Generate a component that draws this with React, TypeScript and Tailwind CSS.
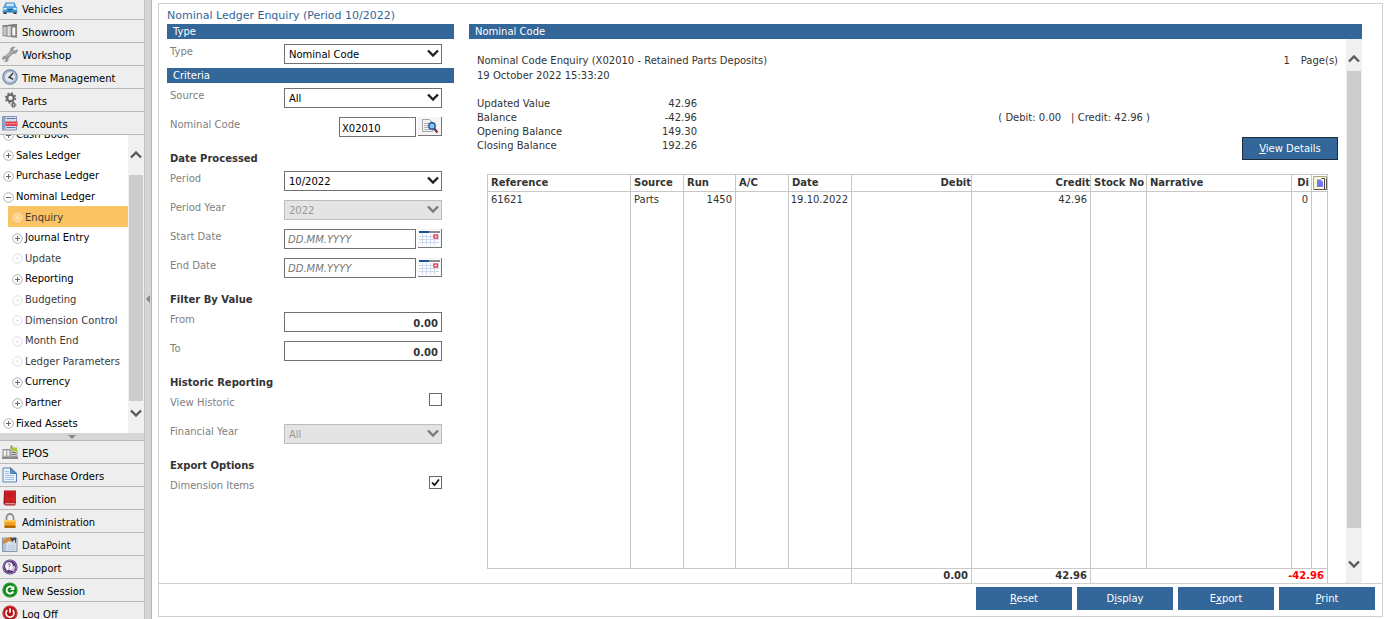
import { ReactNode, useState } from "react";

interface NavEntry {
    name: string;
    icon: ReactNode;
}

interface TreeEntry {
    name: string;
    kind: "plus" | "minus" | "leaf";
    level: number;
    active?: boolean;
}

const Icon = ({ children }: { children: ReactNode }) => (
    <svg viewBox="0 0 16 16" className="w-4 h-4 shrink-0" aria-hidden="true">
        {children}
    </svg>
);

const CarIcon = () => (
    <Icon>
        <path d="M3.5 2.5h9l1.8 4.5H1.7z" fill="#3d8fc9" />
        <path d="M4.6 3.5h6.8l1 3H3.6z" fill="#cfe6f5" />
        <path d="M.8 7.5 2 6.3h12l1.2 1.2v5H.8z" fill="#4fa6e0" />
        <path d="M1.5 12.3h3V14h-3zM11.5 12.3h3V14h-3z" fill="#333" />
        <path d="M1.6 8h2.8v1.6H1.6zM11.6 8h2.8v1.6h-2.8z" fill="#f4fbff" />
        <path d="M5.5 9h5v1.6h-5z" fill="#1c628f" />
        <path d="M.8 11.3h14.4v1H.8z" fill="#2773a6" />
    </Icon>
);

const ShowroomIcon = () => (
    <Icon>
        <path d="M.5 2.500 15 1v14L.5 13z" fill="#8f8f8f" />
        <path d="M1.300 3.500 4.500 3.200v9.300l-3.200-.5z" fill="#c4c4c4" />
        <path d="M5.500 3.200 8.500 3v10l-3-.4z" fill="#dedede" />
        <path d="m9.800 4.200 4-.4v9.400l-4-.6z" fill="#f6f6f6" stroke="#6f6f6f" strokeWidth=".8" />
        <path d="M.5 2.500 15 1v1.500L.5 3.700z" fill="#777" />
    </Icon>
);

const WrenchIcon = () => (
    <Icon>
        <path
            d="M15.3 3.4 12.8 5l-1.6-.5-.3-1.7 2.3-1.7C11.4.6 9.4 1 8.7 2.7c-.5 1.1-.2 2-.5 2.600L3.7 9.900c-.8.2-2.3 0-3 1.5-.5 1.2-.2 2.2.2 2.7l1.500-1.4 1.3.3.4 1.3-1.6 1.400c1.2.6 2.9.1 3.500-1.300.4-1 .1-1.700.4-2.300l4.400-4.500c.8-.3 1.600.1 2.700-.3 1.500-.6 2.300-2.300 1.800-3.900z"
            fill="#9a9a9a"
            stroke="#858585"
            strokeWidth=".5"
        />
        <path d="m5 10.500 5.500-5.600" stroke="#cfcfcf" />
    </Icon>
);

const ClockIcon = () => (
    <Icon>
        <circle cx="8" cy="8" r="7.200" fill="#b7c4d8" stroke="#7488a8" strokeWidth="1.200" />
        <circle cx="8" cy="8" r="5.400" fill="#e3e9f2" stroke="#93a2ba" strokeWidth=".7" />
        <path d="m11 4.300-3.800 3.900 4 2.200" fill="none" stroke="#333" strokeWidth="1.500" />
    </Icon>
);

const GearsIcon = () => (
    <Icon>
        <circle cx="8.500" cy="6" r="3.300" fill="#ededed" stroke="#666" strokeWidth="2.200" />
        <circle cx="8.500" cy="6" r="4.900" fill="none" stroke="#6f6f6f" strokeWidth="1.700" strokeDasharray="1.900 1.950" />
        <circle cx="11.500" cy="13" r="1.500" fill="#eee" stroke="#6b6b6b" strokeWidth="1.500" />
        <circle cx="11.500" cy="13" r="2.500" fill="none" stroke="#888" strokeDasharray="1 1" />
    </Icon>
);

const AccountsIcon = () => (
    <Icon>
        <path d="M.5 1.500h14v13.500H.5z" fill="#d4deed" stroke="#8296b5" />
        <path d="M1 2h2.500v12.500H1z" fill="#8da5cd" />
        <path d="M4.500 3.500h9M4.500 12.500h9" stroke="#5c79a9" />
        <path d="M3.500 6.500h12V11h-12z" fill="#e0404c" />
        <path d="M4.500 8.700h10" stroke="#f7b4b8" strokeDasharray="1.500 .8" />
    </Icon>
);

const EposIcon = () => (
    <Icon>
        <path d="M0 12.500h16V15H0z" fill="#8b8b8b" />
        <path d="M.5 5h8v7.500h-8z" fill="#909090" />
        <path d="M1.600 6.300h2.600v5.400H1.600zM5.200 6.300h2.200v5.400H5.200z" fill="#f1f1f1" />
        <path d="M8.500 1.500h2V5h-2z" fill="#8c8c8c" />
        <path d="M9 6h6v6.500H9z" fill="#cfcfcf" stroke="#8f8f8f" strokeWidth=".8" />
        <path d="M10 3.500h5V7h-5z" fill="#a6cc3a" />
        <path d="M10 8.500h4M10 10.500h4" stroke="#777" />
    </Icon>
);

const OrdersIcon = () => (
    <Icon>
        <path d="M1 1h8l5.500 5.200V15H1z" fill="#eaf2fc" stroke="#5f82b3" />
        <path d="M8.500 1v5.500h6z" fill="#5b93d6" stroke="#41699f" strokeWidth=".8" />
        <path d="M3 4.500h4M3 6.500h4M3 8.500h9M3 10.500h9M3 12.500h9" stroke="#a5c0e3" />
    </Icon>
);

const BookIcon = () => (
    <Icon>
        <path d="M2 .5h12v13l-1 2H3.500L1.500 14z" fill="#a01018" />
        <path d="M3 1h11v11.800H3z" fill="#cf1d24" />
        <path d="M3 13.800h10.500" stroke="#ead5cc" />
        <path d="M5 4h6M5 6h6" stroke="#a8141b" strokeWidth=".9" />
    </Icon>
);

const LockIcon = () => (
    <Icon>
        <path d="M4.500 8V4.500a3.500 3.500 0 0 1 7 0V8" fill="none" stroke="#8d8d8d" strokeWidth="1.800" />
        <path d="M2.500 7h11v8h-11z" fill="#f2a31b" />
        <path d="M2.500 7h11v2h-11z" fill="#ffcb57" />
        <path d="M2.500 12.500h11V15h-11z" fill="#b56a08" />
    </Icon>
);

const DataPointIcon = () => (
    <Icon>
        <path d="M.5 2h14.500v13.500H.5z" fill="#d5dfea" stroke="#8698ad" />
        <path d="M1 2.500h3.200V15H1z" fill="#b1c3da" />
        <path d="M1 4.500 4 2l5-1 2 2-1 3-3-1-3 2-3 .5z" fill="#d98a3e" />
        <path d="m8 2 6-.5v5.500l-3.500-1z" fill="#4a4f57" />
        <path d="M10.500 5.500 13 4v3z" fill="#f1f1f1" />
        <path d="M6 9.500h7M6 11.500h7M6 13.500h7" stroke="#b9c8da" />
    </Icon>
);

const SupportIcon = () => (
    <Icon>
        <circle cx="8" cy="8" r="7.600" fill="#5b3b7d" />
        <circle cx="8" cy="8" r="6.600" fill="none" stroke="#9c83b8" strokeWidth=".8" />
        <path d="M12.500 6.500c1.500 2 .5 4-.5 4.500l.5 2-2.200-1.300c-1.500.1-2.500-.3-3.300-.9" fill="#cfc2dd" />
        <circle cx="7" cy="7" r="3.800" fill="#fff" />
        <path d="M4.500 9v3L7 10z" fill="#fff" />
        <path d="M5.800 6.200c0-1.700 2.500-1.600 2.500-.1 0 .9-1.200.9-1.200 1.900M7.100 8.700v.9" fill="none" stroke="#5b3b7d" strokeWidth=".9" />
    </Icon>
);

const SessionIcon = () => (
    <Icon>
        <circle cx="8" cy="8" r="7.600" fill="#108a1b" />
        <circle cx="8" cy="8" r="6.800" fill="none" stroke="#3da547" strokeWidth=".7" />
        <path d="M10.500 5.500A3.500 3.500 0 1 0 11.300 9.500" fill="none" stroke="#fff" strokeWidth="1.900" />
        <path d="M12.300 3.800v4.200H8z" fill="#fff" />
    </Icon>
);

const PowerIcon = () => (
    <Icon>
        <circle cx="8" cy="8" r="7.600" fill="#b5141b" />
        <circle cx="8" cy="8" r="6.800" fill="none" stroke="#d35a5f" strokeWidth=".7" />
        <path d="M5.300 5.200a4 4 0 1 0 5.400 0M8 3.300v4.500" fill="none" stroke="#fff" strokeWidth="1.600" />
    </Icon>
);

const topNav: NavEntry[] = [
    { name: "Vehicles", icon: <CarIcon /> },
    { name: "Showroom", icon: <ShowroomIcon /> },
    { name: "Workshop", icon: <WrenchIcon /> },
    { name: "Time Management", icon: <ClockIcon /> },
    { name: "Parts", icon: <GearsIcon /> },
    { name: "Accounts", icon: <AccountsIcon /> },
];

const bottomNav: NavEntry[] = [
    { name: "EPOS", icon: <EposIcon /> },
    { name: "Purchase Orders", icon: <OrdersIcon /> },
    { name: "edition", icon: <BookIcon /> },
    { name: "Administration", icon: <LockIcon /> },
    { name: "DataPoint", icon: <DataPointIcon /> },
    { name: "Support", icon: <SupportIcon /> },
    { name: "New Session", icon: <SessionIcon /> },
    { name: "Log Off", icon: <PowerIcon /> },
];

const tree: TreeEntry[] = [
    { name: "Cash Book", kind: "plus", level: 0 },
    { name: "Sales Ledger", kind: "plus", level: 0 },
    { name: "Purchase Ledger", kind: "plus", level: 0 },
    { name: "Nominal Ledger", kind: "minus", level: 0 },
    { name: "Enquiry", kind: "leaf", level: 1, active: true },
    { name: "Journal Entry", kind: "plus", level: 1 },
    { name: "Update", kind: "leaf", level: 1 },
    { name: "Reporting", kind: "plus", level: 1 },
    { name: "Budgeting", kind: "leaf", level: 1 },
    { name: "Dimension Control", kind: "leaf", level: 1 },
    { name: "Month End", kind: "leaf", level: 1 },
    { name: "Ledger Parameters", kind: "leaf", level: 1 },
    { name: "Currency", kind: "plus", level: 1 },
    { name: "Partner", kind: "plus", level: 1 },
    { name: "Fixed Assets", kind: "plus", level: 0 },
];

const Chevron = ({ className }: { className: string }) => (
    <svg viewBox="0 0 12 8" className={className} fill="none" stroke="currentColor" strokeWidth="2.400" aria-hidden="true">
        <path d="m1 1.500 5 5 5-5" />
    </svg>
);

const NodeMark = ({ kind, active }: { kind: TreeEntry["kind"]; active?: boolean }) => {
    if (kind === "leaf") {
        return (
            <svg viewBox="0 0 11 11" className="w-[11px] h-[11px] shrink-0" aria-hidden="true">
                <circle cx="5.500" cy="5.500" r="4.700" fill={active ? "#fcd594" : "#fff"} stroke={active ? "#fbd9a0" : "#dedede"} />
                <circle cx="5.500" cy="5.500" r=".8" fill={active ? "#fff" : "#c4c4c4"} />
            </svg>
        );
    }
    return (
        <svg viewBox="0 0 11 11" className="w-[11px] h-[11px] shrink-0" fill="none" aria-hidden="true">
            <circle cx="5.500" cy="5.500" r="4.800" fill="#fff" stroke="#b0b0b0" />
            <path d="M3 5.500h5" stroke="#666" />
            {kind === "plus" && <path d="M5.500 3v5" stroke="#666" />}
        </svg>
    );
};

const NavButton = ({ name, icon }: NavEntry) => (
    <button className="w-full h-[23px] shrink-0 flex items-center gap-1 pl-[2px] bg-[#eeeeee] border-b border-[#b9b9b9] text-left">
        {icon}
        <span className="pt-[3px]">{name}</span>
    </button>
);

const SideBar = () => (
    <nav className="w-[145px] shrink-0 h-full overflow-hidden flex flex-col border-r border-[#c4c4c4] text-black">
        <div className="h-[135px] shrink-0 flex flex-col justify-end overflow-hidden">
            {topNav.map((entry) => (
                <NavButton key={entry.name} {...entry} />
            ))}
        </div>

        <div className="h-[298px] shrink-0 flex bg-white">
            <div className="flex-1 flex flex-col justify-end overflow-hidden">
                <ul className="h-[309px] shrink-0 flex flex-col">
                    {tree.map((node) => (
                        <li key={node.name} className={`flex-1 flex ${node.level ? "pl-2" : ""}`}>
                            <a
                                href="#"
                                className={`w-[120px] pt-[2px] flex items-center gap-[2px] whitespace-nowrap ${
                                    node.level ? "pl-1" : "pl-[3px]"
                                } ${node.active ? "bg-[#fac364]" : ""} ${
                                    node.kind === "leaf" ? "text-[#3c3c3c]" : ""
                                }`}
                            >
                                <NodeMark kind={node.kind} active={node.active} />
                                {node.name}
                            </a>
                        </li>
                    ))}
                </ul>
            </div>
            <div className="w-4 shrink-0 flex flex-col items-center bg-[#f0f0f0] text-[#5a5a5a]">
                <div className="h-10 flex items-center">
                    <Chevron className="w-3 h-2 rotate-180" />
                </div>
                <div className="w-[14px] flex-1 bg-[#cdcdcd]" />
                <div className="h-8 pt-2">
                    <Chevron className="w-3 h-2" />
                </div>
            </div>
        </div>

        <div className="h-2 shrink-0 flex items-center justify-center bg-[#d6d6d6] border-b border-[#b9b9b9]">
            <svg viewBox="0 0 8 4" className="w-2 h-1" aria-hidden="true">
                <path d="M0 0h8L4 4z" fill="#888" />
            </svg>
        </div>

        {bottomNav.map((entry) => (
            <NavButton key={entry.name} {...entry} />
        ))}
    </nav>
);

const Bar = ({ children }: { children: ReactNode }) => (
    <h2 className="h-[15px] shrink-0 px-[6px] leading-4 bg-[#336699] text-white">{children}</h2>
);

const GroupTitle = ({ children }: { children: ReactNode }) => (
    <h3 className="h-[25px] pl-[3px] flex items-end leading-[15px] font-bold text-[#333]">{children}</h3>
);

const Row = ({ id, label, children }: { id: string; label: string; children: ReactNode }) => (
    <div className="h-[29px] pl-[3px] pr-3 flex items-start justify-between">
        <label htmlFor={id} className="pt-[5px] leading-4 text-[#808080]">
            {label}
        </label>
        {children}
    </div>
);

const Select = ({ id, value, disabled }: { id: string; value: string; disabled?: boolean }) => (
    <div className="relative w-[158px] mt-[5px]">
        <select
            id={id}
            disabled={disabled}
            className="appearance-none w-full h-5 pl-1 pt-[2px] border border-[#707070] bg-white text-black disabled:bg-[#e4e4e4] disabled:border-[#bdbdbd] disabled:text-[#9a9a9a] disabled:opacity-100"
        >
            <option>{value}</option>
        </select>
        <Chevron
            className={`absolute right-[3px] top-[5px] w-3 h-2 pointer-events-none ${
                disabled ? "text-[#7a7a7a]" : "text-[#222]"
            }`}
        />
    </div>
);

const IconButton = ({ label, children }: { label: string; children: ReactNode }) => (
    <button
        aria-label={label}
        className="w-6 h-[19px] flex items-center justify-center bg-[#f5f5f5] border-r border-b border-[#777]"
    >
        {children}
    </button>
);

const DateField = ({ id }: { id: string }) => (
    <div className="w-[158px] mt-[5px] flex justify-between">
        <input
            id={id}
            placeholder="DD.MM.YYYY"
            className="w-[132px] h-5 px-[3px] border border-[#707070] bg-white italic placeholder:text-[#777]"
        />
        <IconButton label="Open calendar">
            <svg viewBox="0 0 21 16" className="w-[21px] h-4" aria-hidden="true">
                <path d="M0 0h21v16H0z" fill="#fdfdff" />
                <path d="M0 1h10v2H0z" fill="#17539b" />
                <path d="M10 1h11v2H10z" fill="#8a8a8a" />
                <path d="M0 6.500h20M0 9.500h20M0 12.500h20M3.500 4v11M7.500 4v11M11.500 4v11M15.500 4v11" stroke="#ccd8ee" />
                <path d="M15 5h3.500v3H15z" fill="#fff" stroke="#e0485a" strokeWidth="1.500" />
            </svg>
        </IconButton>
    </div>
);

const ValueField = ({ id }: { id: string }) => (
    <input
        id={id}
        defaultValue="0.00"
        className="w-[158px] h-5 mt-[5px] px-[3px] pt-[2px] border border-[#707070] bg-white text-right font-bold text-[#333]"
    />
);

const CheckBox = ({ id, initial }: { id: string; initial: boolean }) => {
    const [checked, setChecked] = useState<boolean>(initial);

    return (
        <span className="relative mt-[3px]">
            <input
                id={id}
                type="checkbox"
                checked={checked}
                onChange={() => setChecked(!checked)}
                className="appearance-none block w-[13px] h-[13px] border border-[#666] bg-white"
            />
            {checked && (
                <svg viewBox="0 0 13 13" className="absolute inset-0 w-[13px] h-[13px] pointer-events-none" aria-hidden="true">
                    <path d="m3 6.500 2.500 2.700L10 3.500" fill="none" stroke="#111" strokeWidth="1.800" />
                </svg>
            )}
        </span>
    );
};

const Criteria = () => (
    <form className="w-[287px] shrink-0" onSubmit={(e) => e.preventDefault()}>
        <Bar>Type</Bar>
        <Row id="type" label="Type">
            <Select id="type" value="Nominal Code" />
        </Row>
        <Bar>Criteria</Bar>
        <Row id="source" label="Source">
            <Select id="source" value="All" />
        </Row>
        <Row id="code" label="Nominal Code">
            <div className="mt-[5px] flex gap-[2px]">
                <input
                    id="code"
                    defaultValue="X02010"
                    className="w-[77px] h-5 px-[2px] pt-[2px] border border-[#707070] bg-white text-black"
                />
                <IconButton label="Find nominal code">
                    <svg viewBox="0 0 18 16" className="w-[18px] h-4" aria-hidden="true">
                        <path d="M1.500 1.500h7l3 3v9h-10z" fill="#f2f2f2" stroke="#a5a5a5" />
                        <path d="M3 5.500h5M3 7.500h5M3 9.500h5M3 11.500h6" stroke="#b5b5b5" />
                        <path d="m13 10.500 3.500 4" stroke="#7a3038" strokeWidth="2.200" />
                        <circle cx="11" cy="8" r="3.200" fill="#8cc4f0" stroke="#24549c" strokeWidth="1.400" />
                    </svg>
                </IconButton>
            </div>
        </Row>

        <GroupTitle>Date Processed</GroupTitle>
        <Row id="period" label="Period">
            <Select id="period" value="10/2022" />
        </Row>
        <Row id="periodYear" label="Period Year">
            <Select id="periodYear" value="2022" disabled />
        </Row>
        <Row id="startDate" label="Start Date">
            <DateField id="startDate" />
        </Row>
        <Row id="endDate" label="End Date">
            <DateField id="endDate" />
        </Row>

        <GroupTitle>Filter By Value</GroupTitle>
        <Row id="from" label="From">
            <ValueField id="from" />
        </Row>
        <Row id="to" label="To">
            <ValueField id="to" />
        </Row>

        <GroupTitle>Historic Reporting</GroupTitle>
        <Row id="historic" label="View Historic">
            <CheckBox id="historic" initial={false} />
        </Row>
        <Row id="financialYear" label="Financial Year">
            <Select id="financialYear" value="All" disabled />
        </Row>

        <GroupTitle>Export Options</GroupTitle>
        <Row id="dimension" label="Dimension Items">
            <CheckBox id="dimension" initial={true} />
        </Row>
    </form>
);

const summary = [
    { label: "Updated Value", value: "42.96" },
    { label: "Balance", value: "-42.96" },
    { label: "Opening Balance", value: "149.30" },
    { label: "Closing Balance", value: "192.26" },
];

const LedgerTable = () => (
    <table className="w-full table-fixed border-collapse leading-[14px] [&_th]:border [&_th]:border-[#c8c8c8] [&_th]:p-0 [&_td]:p-0 [&_tbody_td]:border-x [&_td]:border-[#c8c8c8]">
        <colgroup>
            <col className="w-[143px]" />
            <col className="w-[53px]" />
            <col className="w-[52px]" />
            <col className="w-[53px]" />
            <col className="w-[63px]" />
            <col className="w-[120px]" />
            <col className="w-[119px]" />
            <col className="w-[56px]" />
            <col />
            <col className="w-5" />
            <col className="w-4" />
        </colgroup>
        <thead>
            <tr className="h-[17px] text-left whitespace-nowrap">
                <th><span className="pl-[3px]">Reference</span></th>
                <th><span className="pl-[3px]">Source</span></th>
                <th><span className="pl-[3px]">Run</span></th>
                <th><span className="pl-[3px]">A/C</span></th>
                <th><span className="pl-[3px]">Date</span></th>
                <th className="text-right">Debit</th>
                <th className="text-right">Credit</th>
                <th><span className="pl-[3px]">Stock No</span></th>
                <th><span className="pl-[3px]">Narrative</span></th>
                <th className="text-right"><span className="pr-[2px]">Di</span></th>
                <th>
                    <svg viewBox="0 0 14 14" className="w-[14px] h-[14px] mx-auto" role="img" aria-label="Notes">
                        <path d="M.5.5h13v13H.5z" fill="#fbf7cf" stroke="#a8a88c" />
                        <path d="M4 3.500h3.500L10 6v5H4z" fill="#7474f4" />
                        <path d="M8.500 2.500h3V13" fill="none" stroke="#444" />
                        <path d="M1 13.500h12.500V3" fill="none" stroke="#555" />
                    </svg>
                </th>
            </tr>
        </thead>
        <tbody>
            <tr className="h-4">
                <td><span className="pl-[3px]">61621</span></td>
                <td><span className="pl-[3px]">Parts</span></td>
                <td className="text-right"><span className="pr-[3px]">1450</span></td>
                <td />
                <td className="text-right"><span className="pr-[3px]">19.10.2022</span></td>
                <td />
                <td className="text-right"><span className="pr-[3px]">42.96</span></td>
                <td />
                <td />
                <td className="text-right"><span className="pr-[3px]">0</span></td>
                <td />
            </tr>
            <tr className="h-[361px]">
                <td /><td /><td /><td /><td /><td /><td /><td /><td /><td /><td />
            </tr>
        </tbody>
        <tfoot>
            <tr className="h-[15px] text-right font-bold">
                <td colSpan={5} className="border-t" />
                <td className="border-x border-t"><span className="pr-[3px]">0.00</span></td>
                <td className="border-x border-t"><span className="pr-[3px]">42.96</span></td>
                <td colSpan={4} className="border-x border-t text-[#ff0000]">
                    <span className="pr-[3px]">-42.96</span>
                </td>
            </tr>
        </tfoot>
    </table>
);

const Report = () => (
    <section className="flex-1 flex flex-col overflow-hidden text-[#333]">
        <Bar>Nominal Code</Bar>
        <div className="flex-1 min-h-0 flex">
            <div className="flex-1 min-w-0 overflow-hidden pl-2 pr-2 pt-[14px]">
                <div className="flex justify-between leading-[15px]">
                    <div>
                        <p>Nominal Code Enquiry (X02010 - Retained Parts Deposits)</p>
                        <p>19 October 2022 15:33:20</p>
                    </div>
                    <div className="flex gap-[11px]">
                        <span>1</span>
                        <span>Page(s)</span>
                    </div>
                </div>

                <div className="mt-[14px] h-[63px] flex leading-[14px]">
                    <dl className="w-[220px]">
                        {summary.map((line) => (
                            <div key={line.label} className="flex justify-between">
                                <dt>{line.label}</dt>
                                <dd>{line.value}</dd>
                            </div>
                        ))}
                    </dl>
                    <p className="ml-auto mr-[92px] mt-[14px] flex gap-[10px]">
                        <span>( Debit: 0.00</span>
                        <span>| Credit: 42.96 )</span>
                    </p>
                    <button className="self-end w-24 h-[23px] bg-[#336699] border border-[#1d2b3a] text-white">
                        <u>V</u>iew Details
                    </button>
                </div>

                <div className="mt-[14px] pl-[10px] pr-[10px]">
                    <LedgerTable />
                </div>
            </div>
            <div className="w-4 shrink-0 flex flex-col items-center bg-[#f0f0f0] text-[#5a5a5a]">
                <div className="h-8 pt-4">
                    <Chevron className="w-3 h-2 rotate-180" />
                </div>
                <div className="w-[14px] flex-1 bg-[#cdcdcd]" />
                <div className="h-[55px] pt-8">
                    <Chevron className="w-3 h-2" />
                </div>
            </div>
        </div>
    </section>
);

const actions = [
    { before: "", key: "R", after: "eset" },
    { before: "D", key: "i", after: "splay" },
    { before: "E", key: "x", after: "port" },
    { before: "", key: "P", after: "rint" },
];

export default function App() {
    return (
        <div className="h-screen flex overflow-hidden bg-white text-[10px] leading-4 font-['DejaVu_Sans','Noto_Sans',sans-serif]">
            <SideBar />

            <div className="w-[7px] shrink-0 flex items-center justify-center bg-[#d6d6d6] border-r border-[#b5b5b5]">
                <svg viewBox="0 0 4 8" className="w-1 h-2 mb-[22px]" aria-hidden="true">
                    <path d="M4 0v8L0 4z" fill="#888" />
                </svg>
            </div>

            <main className="flex-1 min-w-0 flex flex-col mt-[3px] mr-[3px] mb-[2px] ml-[6px] border border-[#d0d0d0]">
                <h1 className="h-5 shrink-0 pl-2 pt-1 text-[11px] text-[#336699]">
                    Nominal Ledger Enquiry (Period 10/2022)
                </h1>

                <div className="flex-1 min-h-0 flex gap-[15px] pl-2 pr-5">
                    <Criteria />
                    <Report />
                </div>

                <div className="h-[33px] shrink-0 flex justify-end gap-[5px] pt-[3px] pr-[7px] border-t border-[#d0d0d0]">
                    {actions.map((action) => (
                        <button key={action.after} className="w-24 h-[23px] pt-px bg-[#336699] text-white">
                            {action.before}
                            <u>{action.key}</u>
                            {action.after}
                        </button>
                    ))}
                </div>
            </main>
        </div>
    );
}
